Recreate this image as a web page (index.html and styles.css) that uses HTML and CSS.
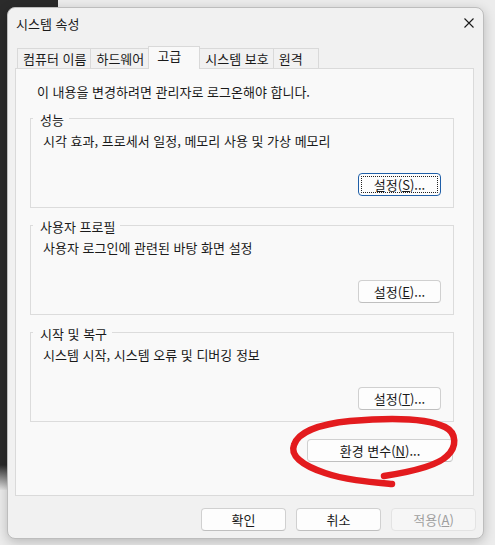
FILE: index.html
```html
<!DOCTYPE html>
<html lang="ko">
<head>
    <meta charset="UTF-8">
    <title>시스템 속성</title>
    <link rel="stylesheet" href="styles.css">
</head>
<body>
<div class="desktop">
    <div class="back-window"></div>

    <div class="dialog">
        <div class="titlebar">
            <span class="title">시스템 속성</span>
            <button class="close" aria-label="닫기">
                <svg width="10" height="10" viewBox="0 0 10 10">
                    <path d="M0.5 0.5 L9.5 9.5 M9.5 0.5 L0.5 9.5" stroke="#1a1a1a" stroke-width="1.1" fill="none"/>
                </svg>
            </button>
        </div>

        <div class="tabs">
            <div class="tab">컴퓨터 이름</div>
            <div class="tab">하드웨어</div>
            <div class="tab active">고급</div>
            <div class="tab">시스템 보호</div>
            <div class="tab">원격</div>
        </div>

        <div class="panel">
            <p class="notice">이 내용을 변경하려면 관리자로 로그온해야 합니다.</p>

            <fieldset class="group">
                <legend>성능</legend>
                <p>시각 효과, 프로세서 일정, 메모리 사용 및 가상 메모리</p>
                <div class="group-actions">
                    <button class="btn focused">설정(<u>S</u>)...</button>
                </div>
            </fieldset>

            <fieldset class="group">
                <legend>사용자 프로필</legend>
                <p>사용자 로그인에 관련된 바탕 화면 설정</p>
                <div class="group-actions">
                    <button class="btn">설정(<u>E</u>)...</button>
                </div>
            </fieldset>

            <fieldset class="group">
                <legend>시작 및 복구</legend>
                <p>시스템 시작, 시스템 오류 및 디버깅 정보</p>
                <div class="group-actions">
                    <button class="btn">설정(<u>T</u>)...</button>
                </div>
            </fieldset>

            <div class="panel-actions">
                <button class="btn env">환경 변수(<u>N</u>)...</button>
            </div>
        </div>

        <div class="footer">
            <button class="btn footer-btn">확인</button>
            <button class="btn footer-btn">취소</button>
            <button class="btn footer-btn" disabled>적용(<u>A</u>)</button>
        </div>
    </div>

    <!-- red marker circle drawn over the screenshot -->
    <svg class="marker" width="175" height="85" viewBox="285 408 175 85">
        <path d="M392 484 C370 482 345 480 325 473 C301 465 290 455 294 445 C298 432 320 424 350 421 C385 418 425 417 445 427 C457 433 457 447 447 456 C437 466 410 472 384 476"
              fill="none" stroke="#e31b1e" stroke-width="6.5" stroke-linecap="round" stroke-linejoin="round"/>
    </svg>
</div>
</body>
</html>
```

FILE: styles.css
```css
* {
    box-sizing: border-box;
}

body {
    margin: 0;
    font-family: "Noto Sans CJK KR", "Noto Sans", sans-serif;
    font-size: 13px;
    color: #1a1a1a;
}

.desktop {
    position: relative;
    width: 495px;
    height: 545px;
    padding: 7px 0 0 7px;
    background: #ececec;
    overflow: hidden;
}

.back-window {
    position: absolute;
    left: 0;
    top: 0;
    width: 58px;
    height: 490px;
    background: linear-gradient(to bottom, #2b2b2b 0, #2b2b2b 465px, #e6e6e6 490px);
}

.dialog {
    position: relative;
    width: 477px;
    background: #f1f1f1;
    border: 1px solid #bdbdbd;
    border-radius: 8px;
    box-shadow: 0 3px 12px rgba(0,0,0,.22);
}

.titlebar {
    height: 30px;
    display: flex;
    align-items: center;
    justify-content: space-between;
    padding: 0 9px 0 8px;
}

.close {
    width: 10px;
    height: 10px;
    padding: 0;
    border: none;
    background: none;
    display: flex;
}

.tabs {
    height: 30px;
    display: flex;
    align-items: flex-end;
    margin-left: 7px;
    padding-left: 2px;
}

.tab {
    height: 20px;
    min-width: 46px;
    padding: 0 4px 0 5px;
    line-height: 19px;
    border: 1px solid #d9d9d9;
    border-bottom: none;
    background: #f1f1f1;
    white-space: nowrap;
}

.tab + .tab {
    margin-left: -1px;
}

.tab.active {
    position: relative;
    z-index: 1;
    height: 23px;
    min-width: 52px;
    padding-left: 8px;
    line-height: 17px;
    margin-bottom: -1px;
    background: #f9f9f9;
}

.panel {
    margin: 0 9px 0 7px;
    padding: 15px 19px 33px 14px;
    background: #f9f9f9;
    border: 1px solid #dadada;
}

.notice {
    margin: 0 0 8px;
    padding-left: 7px;
    line-height: 16px;
}

.group {
    margin: 0;
    padding: 5px 12px 11px 12px;
    border: 1px solid #dcdcdc;
    min-inline-size: 0;
}

.group + .group {
    margin-top: 7px;
}

.group legend {
    margin-left: -10px;
    padding: 4px 5px 0 7px;
    line-height: 16px;
}

.group p {
    margin: 0;
    line-height: 16px;
}

.group-actions {
    display: flex;
    justify-content: flex-end;
    margin-top: 24px;
}

.btn {
    height: 23px;
    width: 83px;
    padding: 0;
    font-family: inherit;
    font-size: 13px;
    line-height: 21px;
    color: #1a1a1a;
    background: #fdfdfd;
    border: 1px solid #d0d0d0;
    border-bottom-color: #bfbfbf;
    border-radius: 4px;
}

.btn.focused {
    border-color: #1f5fa8;
    outline: 1px dotted #222;
    outline-offset: -4px;
}

.btn:disabled {
    color: #9e9e9e;
    background: #f6f6f6;
    border-color: #e3e3e3;
}

.panel-actions {
    display: flex;
    justify-content: flex-end;
    margin-top: 17px;
    padding-right: 1px;
}

.btn.env {
    width: 146px;
}

.footer {
    display: flex;
    justify-content: flex-end;
    gap: 10px;
    padding: 12px 7px 7px;
}

.footer-btn {
    width: 85px;
}

.marker {
    position: absolute;
    left: 285px;
    top: 408px;
}
```
